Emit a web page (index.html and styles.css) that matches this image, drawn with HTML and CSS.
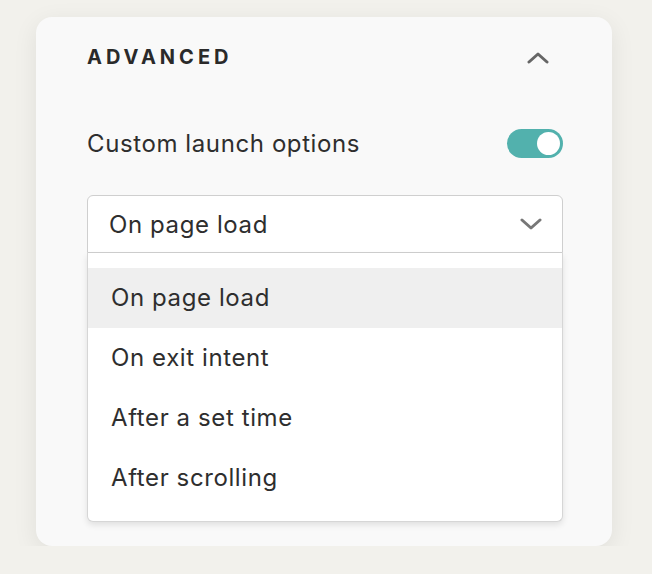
FILE: index.html
```html
<!DOCTYPE html>
<html lang="en">

<head>
    <meta charset="UTF-8">
    <meta name="viewport" content="width=device-width, initial-scale=1.0">
    <title>Advanced</title>
    <link rel="stylesheet" href="styles.css">
</head>

<body>
    <div class="panel">
        <div class="panel-header">
            <h3>Advanced</h3>
            <svg class="chevron-up" width="22" height="13" viewBox="0 0 22 13">
                <path d="M2 11 L11 3 L20 11" fill="none" stroke="#666" stroke-width="3" stroke-linecap="round" stroke-linejoin="round" />
            </svg>
        </div>

        <div class="option-row">
            <span>Custom launch options</span>
            <div class="toggle on">
                <div class="knob"></div>
            </div>
        </div>

        <div class="select">
            <div class="select-value">
                <span>On page load</span>
                <svg width="22" height="13" viewBox="0 0 22 13">
                    <path d="M2 2 L11 10 L20 2" fill="none" stroke="#777" stroke-width="3" stroke-linecap="round" stroke-linejoin="round" />
                </svg>
            </div>
            <ul class="select-list">
                <li class="active">On page load</li>
                <li>On exit intent</li>
                <li>After a set time</li>
                <li>After scrolling</li>
            </ul>
        </div>
    </div>
</body>

</html>
```

FILE: styles.css
```css
body {
    margin: 0;
    padding: 0;
    font-family: 'Inter', 'Helvetica', sans-serif;
    background-color: #f2f1ec;
    color: #2e2e2e;
}

.panel {
    width: 576px;
    box-sizing: border-box;
    margin: 17px 0 0 36px;
    padding: 26px 49px 24px 51px;
    background-color: #f9f9f9;
    border-radius: 16px;
    box-shadow: 0 6px 24px rgba(0, 0, 0, 0.08);
}

.panel-header {
    display: flex;
    align-items: center;
    justify-content: space-between;
    height: 28px;
    padding-right: 14px;
}

.panel-header h3 {
    margin: 0;
    font-size: 20px;
    font-weight: 700;
    letter-spacing: 0.2em;
    text-transform: uppercase;
    color: #2a2a2a;
}

.option-row {
    display: flex;
    align-items: center;
    justify-content: space-between;
    margin-top: 58px;
    font-size: 24px;
    letter-spacing: 0.6px;
}

.toggle {
    width: 56px;
    height: 29px;
    border-radius: 15px;
    background-color: #d0d0d0;
    position: relative;
}

.toggle.on {
    background-color: #52b1ad;
}

.toggle .knob {
    position: absolute;
    top: 3px;
    right: 3px;
    width: 23px;
    height: 23px;
    border-radius: 50%;
    background-color: #fff;
}

.select {
    margin-top: 37px;
    font-size: 24px;
    letter-spacing: 0.6px;
}

.select-value {
    display: flex;
    align-items: center;
    justify-content: space-between;
    height: 56px;
    padding: 0 20px 0 21px;
    background-color: #fff;
    border: 1px solid #cfcfcf;
    border-radius: 6px 6px 0 0;
}

.select-list {
    list-style: none;
    margin: 0;
    padding: 15px 0 13px;
    background-color: #fff;
    border: 1px solid #d6d6d6;
    border-top: none;
    border-radius: 0 0 6px 6px;
    box-shadow: 0 3px 6px rgba(0, 0, 0, 0.1);
}

.select-list li {
    height: 60px;
    line-height: 60px;
    padding-left: 23px;
}

.select-list li.active {
    background-color: #efefef;
}
```
